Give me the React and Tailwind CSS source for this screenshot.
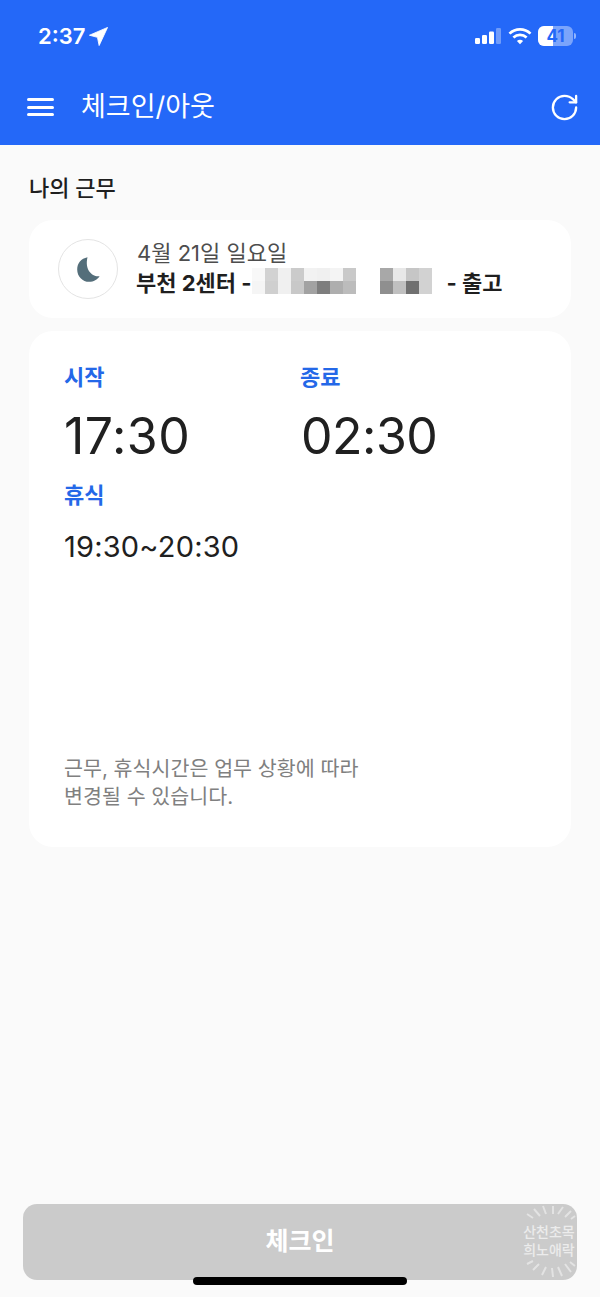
import React from 'react';
import { RotateCw } from 'lucide-react';

const FONT = "font-['Inter','Noto_Sans_CJK_KR',sans-serif]";

// mosaic over the hidden name: [top row, bottom row] per 13px column
const blurLeft = [
  ['#f8f8f8', '#f5f5f5'],
  ['#d2d2d2', '#cfcfcf'],
  ['#f0f0f0', '#f0f0f0'],
  ['#cbcbcb', '#c8c8c8'],
  ['#f2f2f2', '#a2a2a2'],
  ['#f0f0f0', '#7e7e7e'],
  ['#f4f4f4', '#aeaeae'],
  ['#c9c9c9', '#bcbcbc'],
];
const blurRight = [
  ['#a8a8a8', '#8f8f8f'],
  ['#e8e8e8', '#c0c0c0'],
  ['#c6c6c6', '#707070'],
  ['#d2d2d2', '#d2d2d2'],
];

function Mosaic({ cols }) {
  return (
    <div className="mt-[-5px] flex h-[26px] shrink-0">
      {cols.map((c, i) => (
        <div key={i} className="flex w-[13px] flex-col">
          <div className="h-[13px]" style={{ backgroundColor: c[0] }} />
          <div className="h-[13px]" style={{ backgroundColor: c[1] }} />
        </div>
      ))}
    </div>
  );
}

function StatusBar() {
  return (
    <div className="flex h-[72px] items-start justify-between pl-[38px] pr-[24px] pt-[22px]">
      <div className="flex items-center gap-[4px]">
        <span className="text-[22px] font-semibold leading-[28px] text-white">2:37</span>
        <svg width="19" height="19" viewBox="0 0 18 18" className="mt-[1px]">
          <path d="M17.6 0.4 L0.4 7.8 L8 9.8 L9.6 17.6 Z" fill="#fff" stroke="#fff" strokeWidth="0.8" strokeLinejoin="round" />
        </svg>
      </div>
      <div className="flex items-center gap-[6px] pt-[4px]">
        <svg width="28" height="18" viewBox="0 0 28 18">
          <rect x="1" y="11" width="5" height="6" rx="1.2" fill="#fff" />
          <rect x="8" y="8" width="5" height="9" rx="1.2" fill="#fff" />
          <rect x="15" y="4.5" width="5" height="12.5" rx="1.2" fill="#fff" />
          <rect x="22" y="1" width="5" height="16" rx="1.2" fill="#fff" fillOpacity="0.35" />
        </svg>
        <svg width="24" height="18" viewBox="0 0 24 18" fill="none" stroke="#fff" strokeWidth="2.7">
          <path d="M1.5 6.6 C7.3 1 16.7 1 22.5 6.6" />
          <path d="M5.4 10.4 C9.2 6.9 14.8 6.9 18.6 10.4" />
          <path d="M12 17.2 L8.9 13.9 C10.7 12.5 13.3 12.5 15.1 13.9 Z" fill="#fff" stroke="none" />
        </svg>
        <div className="flex items-center">
          <div className="relative flex h-[20px] w-[35px] items-center justify-center overflow-hidden rounded-[6px] bg-white/40">
            <div className="absolute inset-y-0 left-0 w-[15px] bg-white" />
            <span className="relative text-[17px] font-bold leading-none text-[#2468f8]">41</span>
          </div>
          <div className="ml-[1px] h-[6px] w-[2px] rounded-r-sm bg-white/50" />
        </div>
      </div>
    </div>
  );
}

function AppBar() {
  return (
    <div className="flex h-[73px] items-start justify-between pl-[27px] pr-[20px] pt-[16px]">
      <div className="flex items-center gap-[27px]">
        <div className="mt-[1px] flex h-[18px] w-[27px] flex-col justify-between">
          <div className="h-[3px] rounded-full bg-white" />
          <div className="h-[3px] rounded-full bg-white" />
          <div className="h-[3px] rounded-full bg-white" />
        </div>
        <span className="mt-[1px] text-[27px] leading-[36px] text-white">체크인/아웃</span>
      </div>
      <RotateCw className="mt-[4px] h-[31px] w-[31px] text-white" strokeWidth={1.8} />
    </div>
  );
}

function ShiftCard() {
  return (
    <div className="flex h-[98px] items-center gap-[19px] rounded-[24px] bg-white pl-[29px]">
      <div className="flex h-[60px] w-[60px] shrink-0 items-center justify-center rounded-full border border-[#e4e4e4]">
        <svg width="23" height="25" viewBox="0 0 23 25">
          <path d="M10.5 0.3 C4 1.6 0.2 6.4 0.2 12.4 C0.2 19.4 5.6 24.8 12.2 24.8 C16.6 24.8 20.4 22.6 22.6 19.2 C15.4 20.4 7.4 13 10.5 0.3 Z" fill="#546e7a" />
        </svg>
      </div>
      <div className="mt-[-3px] flex flex-col">
        <span className="text-[22px] leading-[31px] text-[#4d4d4d]">4월 21일 일요일</span>
        <div className="ml-[-1px] mt-[1px] flex h-[28px] items-center text-[22px] font-bold text-[#1f1f1f]">
          <span className="whitespace-nowrap">부천 2센터 -</span>
          <Mosaic cols={blurLeft} />
          <div className="ml-[24px]"><Mosaic cols={blurRight} /></div>
          <span className="ml-[15px] whitespace-nowrap">- 출고</span>
        </div>
      </div>
    </div>
  );
}

function TimeCard() {
  return (
    <div className="mt-[13px] flex h-[516px] flex-col rounded-[24px] bg-white pl-[35px] pt-[30px]">
      <div className="flex">
        <div className="w-[236px]">
          <div className="text-[22px] font-semibold leading-[32px] text-[#2468e8]">시작</div>
          <div className="mt-[13px] text-[50px] leading-[60px] tracking-[0.5px] text-[#202020]">17:30</div>
        </div>
        <div>
          <div className="text-[22px] font-semibold leading-[32px] text-[#2468e8]">종료</div>
          <div className="ml-[1px] mt-[13px] text-[50px] leading-[60px] tracking-[-0.5px] text-[#202020]">02:30</div>
        </div>
      </div>
      <div className="mt-[13px] text-[22px] font-semibold leading-[32px] text-[#2468e8]">휴식</div>
      <div className="mt-[18px] text-[29px] leading-[36px] tracking-[0.2px] text-[#202020]">19:30~20:30</div>
      <div className="mt-[190px] text-[20.6px] leading-[28px] text-[#808080]">
        근무, 휴식시간은 업무 상황에 따라
        <br />
        변경될 수 있습니다.
      </div>
    </div>
  );
}

function CheckInButton() {
  return (
    <div className="relative mx-[23px] flex h-[76px] items-center justify-center rounded-[14px] bg-[#cbcbcb]">
      <span className="text-[25px] font-bold text-white">체크인</span>
      {/* watermark stamp */}
      <div className="absolute right-0 top-0 flex h-full w-[56px] flex-col items-center justify-center overflow-hidden">
        <svg width="56" height="76" viewBox="0 0 56 76" className="absolute inset-0" stroke="#e8e8e8" strokeWidth="2" strokeOpacity="0.8">
          <path d="M6 10 L12 14 M13 5 L19 12 M22 2 L25 10 M32 2 L32 10 M42 3 L37 10 M50 7 L44 13 M54 12 L50 15" />
          <path d="M6 60 L12 57 M12 66 L18 60 M21 71 L25 63 M32 73 L31 64 M41 72 L37 63 M50 68 L44 60 M54 62 L49 58" />
        </svg>
        <div className="relative mt-[-3px] whitespace-nowrap text-center text-[14px] font-medium leading-[18px] text-[#ececec]">
          산천초목
          <br />
          희노애락
        </div>
      </div>
    </div>
  );
}

export default function App() {
  return (
    <div className={`flex h-[1297px] w-[600px] flex-col overflow-hidden bg-[#fafafa] ${FONT}`}>
      <div className="h-[145px] shrink-0 bg-[#2468f8]">
        <StatusBar />
        <AppBar />
      </div>

      <div className="flex-1 px-[29px]">
        <h2 className="mt-[28px] h-[47px] text-[22px] font-medium leading-[30px] text-[#1f1f1f]">나의 근무</h2>
        <ShiftCard />
        <TimeCard />
      </div>

      <CheckInButton />
      <div className="relative flex h-[17px] shrink-0 justify-center">
        <div className="mt-[-3px] h-[8px] w-[214px] rounded-full bg-black" />
      </div>
    </div>
  );
}
